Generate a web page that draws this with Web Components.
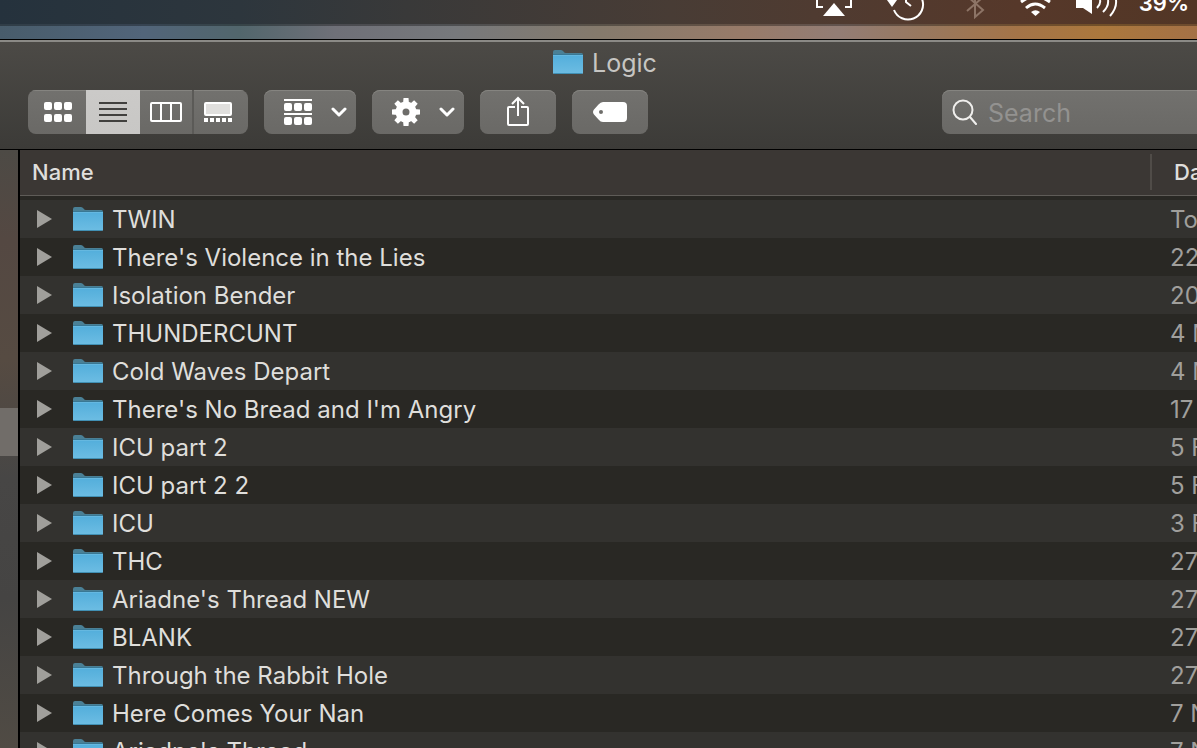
<!DOCTYPE html>
<html lang="en">
<head>
<meta charset="utf-8">
<title>Logic</title>
<style>
  html, body { height: 100%; }
  body { margin: 0; overflow: hidden; background: #292824; font-family: Inter, "Liberation Sans", sans-serif; }
</style>
</head>
<body>
<finder-desktop></finder-desktop>

<script>
const define = (name, html, setup) => {
  const template = document.createElement('template');
  template.innerHTML = html;
  customElements.define(name, class extends HTMLElement {
    constructor() {
      super();
      this.attachShadow({ mode: 'open' }).append(template.content.cloneNode(true));
    }
    connectedCallback() { if (setup) setup(this, this.shadowRoot); }
  });
};

define('folder-icon', `
  <style>
    :host { display: block; width: 30px; height: 24px; }
    svg { display: block; }
  </style>
  <svg width="30" height="24" viewBox="0 0 30 24" aria-hidden="true">
    <defs><linearGradient id="g" x1="0" y1="0" x2="0" y2="1">
      <stop offset="0" stop-color="#53aedb"/><stop offset="1" stop-color="#6dbde3"/>
    </linearGradient></defs>
    <path d="M0 2Q0 0 2 0H8Q9.500 0 10.500 1.500Q11.500 3 13 3H28.500Q30 3 30 4.500V8H0Z" fill="#4a8096"/>
    <path d="M0 5H30V22.500Q30 24 28.500 24H1.500Q0 24 0 22.500Z" fill="url(#g)"/>
    <path d="M0 5.500H30" stroke="#65b8e0"/>
    <path d="M0 4.500H30" stroke="#397894"/>
    <path d="M1 23.500H29" stroke="#4190b4"/>
  </svg>`);

define('menu-bar', `
  <style>
    :host { display: flex; justify-content: flex-end; align-items: flex-end; height: 24px; flex: none; overflow: hidden;
      color: #fff; background: linear-gradient(90deg, #25323d, #2d363d 20%, #393939 34%, #483c35 56%, #4f3b31 68%, #56382a 85%, #523625); }
    svg { display: block; flex: none; }
    .charge { font-size: 22px; line-height: 28px; font-weight: 600; padding: 0 8px 7px 0; height: 28px; }
  </style>
  <svg width="325" height="24" viewBox="0 0 325 24" fill="none" stroke="#fff" stroke-width="2" role="img" aria-label="Status icons">
    <path d="M3 0V7H9M37 0V7H31"/>
    <path d="M20 3L31 16H9Z" fill="#fff" stroke="none"/>
    <path d="M80 10A15 15 0 0 0 108 -1"/>
    <path d="M73 0H83L78 7Z" fill="#fff" stroke="none"/>
    <path d="M92 0V2L97 6"/>
    <path d="M153 11L168 -2M153 -4L169 10L161 17V0" stroke="#8d7466"/>
    <path d="M207 2Q221 -9 236 2" stroke-width="3"/>
    <path d="M212 8Q221 0 231 8" stroke-width="3"/>
    <path d="M217 12Q221.500 8.500 226 12L221.500 16Z" fill="#fff" stroke="none"/>
    <path d="M262 0H278V14L269 8H262Z" fill="#fff" stroke="none"/>
    <path d="M283 8Q287 4 286 0M289 12Q295 6 294 0M296 16Q303 8 302 0"/>
  </svg>
  <span class="charge">39%</span>`);

define('tool-button', `
  <style>
    :host { display: block; flex: none; }
    button { box-sizing: border-box; display: flex; align-items: center; justify-content: center; gap: 19px; width: 100%; height: 44px;
      margin: 0; padding: var(--pad, 0); border: 0; border-radius: 8px; color: #fff; background: linear-gradient(#72716e, #6a6966); box-shadow: inset 0 1px #858480; }
    :host([segment]) button { border-radius: 0; }
    :host([selected]) button { color: #41403e; background: linear-gradient(#cbcac8, #c8c7c5); box-shadow: none; }
    :host([divided]) button { border-right: 2px solid #5b5a57; }
  </style>
  <button type="button"><slot></slot></button>`, (host, root) => {
    const button = root.querySelector('button');
    button.setAttribute('aria-label', host.getAttribute('label'));
    if (host.hasAttribute('segment')) button.setAttribute('aria-pressed', host.hasAttribute('selected'));
  });

define('search-field', `
  <style>
    :host { display: block; flex: none; }
    label { display: flex; align-items: center; gap: 10px; height: 44px; padding-left: 10px; border-radius: 8px 0 0 8px;
      background: linear-gradient(#72716e, #6a6966); box-shadow: inset 0 1px #858480; }
    svg { display: block; flex: none; }
    input { min-width: 0; flex: 1; height: 44px; box-sizing: border-box; padding: 2px 0 0; border: 0; outline: 0; background: none; color: #fff;
      font: 25px/32px Inter, "Liberation Sans", sans-serif; }
    input::placeholder { color: #939290; opacity: 1; }
  </style>
  <label>
    <svg width="26" height="26" viewBox="0 0 26 26" fill="none" stroke="#f0efed" stroke-width="2" stroke-linecap="round" aria-hidden="true"><circle cx="11" cy="11" r="9.500"/><path d="M18 18L24 25"/></svg>
    <input type="search" placeholder="Search" aria-label="Search">
  </label>`);

const chevron = '<svg width="16" height="12" viewBox="0 0 16 12" fill="none" stroke="#fff" stroke-width="3" stroke-linecap="round" stroke-linejoin="round" aria-hidden="true"><path d="M2 3L8 9L14 3"/></svg>';
const dots = (y, size, r) => [0, 10, 20].map(x => `<rect x="${x}" y="${y}" width="${size}" height="${size}" rx="${r}"/>`).join('');
const teeth = [0, 45, 90, 135, 180, 225, 270, 315].map(a => `<path d="M11 6L11.500 0H16.500L17 6Z" transform="rotate(${a} 14 14)"/>`).join('');

define('window-toolbar', `
  <style>
    :host { display: block; flex: none; height: 107px; border-top: 2px solid #8b8a86; border-bottom: 1px solid #000; background: linear-gradient(#4c4a46, #3c3b38); }
    h1 { display: flex; align-items: center; justify-content: center; gap: 9px; margin: 0; padding: 4px 0 0 13px; height: 32px;
      font-size: 25px; line-height: 32px; font-weight: 400; color: #c6c5c2; }
    h1 span { padding-top: 2px; }
    nav { display: flex; gap: 16px; padding: 12px 0 0 28px; }
    .views { display: flex; border-radius: 8px; overflow: hidden; }
    .first { width: 58px; --pad: 0 0 0 2px; }
    .view { width: 54px; }
    .last { --pad: 0 6px 0 0; }
    .menu { width: 92px; --pad: 0 0 0 11px; }
    .action { width: 76px; }
    search-field { width: 255px; margin-left: auto; }
    svg { display: block; flex: none; }
  </style>
  <h1><folder-icon></folder-icon><span>Logic</span></h1>
  <nav>
    <div class="views">
      <tool-button class="first" segment label="Icon view">
        <svg width="28" height="20" viewBox="0 0 28 20" fill="#fff">${dots(0, 8, 2)}${dots(12, 8, 2)}</svg>
      </tool-button>
      <tool-button class="view" segment selected label="List view">
        <svg width="28" height="20" viewBox="0 0 28 20" stroke="currentColor" stroke-width="2"><path d="M0 1H28M0 7H28M0 13H28M0 19H28"/></svg>
      </tool-button>
      <tool-button class="view" segment divided label="Column view">
        <svg width="32" height="20" viewBox="0 0 32 20" fill="none" stroke="#fff" stroke-width="2"><rect x="1" y="1" width="30" height="18" rx="1"/><path d="M11 1V19M21 1V19"/></svg>
      </tool-button>
      <tool-button class="view last" segment label="Gallery view">
        <svg width="28" height="20" viewBox="0 0 28 20" fill="#fff"><rect x="1" y="1" width="26" height="12" rx="1" fill="#e0dfdd" stroke="#fff" stroke-width="2"/><path d="M0 16H4V20H0ZM6 16H10V20H6ZM12 16H16V20H12ZM18 16H22V20H18ZM24 16H28V20H24Z"/></svg>
      </tool-button>
    </div>
    <tool-button class="menu" label="Group items">
      <svg width="28" height="26" viewBox="0 0 28 26" fill="#fff"><path d="M0 0H28V2H0ZM0 14H28V16H0Z"/>${dots(4, 8, 2)}${dots(18, 8, 2)}</svg>${chevron}
    </tool-button>
    <tool-button class="menu" label="Actions">
      <svg width="28" height="28" viewBox="0 0 28 28" fill="#fff">${teeth}<circle cx="14" cy="14" r="7" fill="none" stroke="#fff" stroke-width="7"/></svg>${chevron}
    </tool-button>
    <tool-button class="action" label="Share">
      <svg width="24" height="32" viewBox="0 0 24 32" fill="none" stroke="#fff" stroke-width="2"><path d="M9 11H3Q2 11 2 12V28Q2 29 3 29H21Q22 29 22 28V12Q22 11 21 11H15M12 20V2M6 8L12 2L18 8"/></svg>
    </tool-button>
    <tool-button class="action" label="Edit tags">
      <svg width="34" height="20" viewBox="0 0 34 20" fill="#fff"><path fill-rule="evenodd" d="M10 0H30Q34 0 34 4V16Q34 20 30 20H10Q7.500 20 5.500 17.500L1 12.500Q-1 10 1 7.500L5.500 2.500Q7.500 0 10 0ZM8 8A2 2 0 0 0 8 12A2 2 0 0 0 8 8Z"/></svg>
    </tool-button>
    <search-field></search-field>
  </nav>`);

const files = [
  ['TWIN', 'To'], ["There's Violence in the Lies", '22'], ['Isolation Bender', '20'], ['THUNDERCUNT', '4 M'],
  ['Cold Waves Depart', '4 M'], ["There's No Bread and I'm Angry", '17'], ['ICU part 2', '5 F'], ['ICU part 2 2', '5 F'],
  ['ICU', '3 F'], ['THC', '27'], ["Ariadne's Thread NEW", '27'], ['BLANK', '27'],
  ['Through the Rabbit Hole', '27'], ['Here Comes Your Nan', '7 N'], ["Ariadne's Thread", '7 N']
];

define('file-list', `
  <style>
    :host { display: block; flex: 1; min-width: 0; overflow: hidden; background: #292824; }
    table { width: 100%; table-layout: fixed; border-spacing: 0; color: #dfdedb; }
    th, td { padding: 0; text-align: left; white-space: nowrap; overflow: hidden; }
    th { height: 43px; padding-bottom: 2px; font-size: 22px; line-height: 28px; font-weight: 500; background: #3b3734; border-bottom: 1px solid #5f5c58; }
    th:first-child { padding-left: 12px; }
    th:last-child { width: 47px; }
    th:last-child span { display: block; line-height: 36px; padding-left: 22px; border-left: 2px solid #504c48; }
    tbody::before { content: ""; display: block; height: 4px; }
    td { height: 38px; font-size: 24px; line-height: 36px; }
    td:last-child { height: 36px; padding: 2px 0 0 20px; color: #a09f9c; }
    tbody tr:nth-child(odd) { background: #33322f; }
    .name { display: flex; align-items: center; height: 38px; padding-left: 17px; }
    .name span { padding-top: 2px; }
    button { display: block; width: 15px; height: 18px; margin: 0 21px 0 0; padding: 0; border: 0; background: #a09f9b; clip-path: polygon(0 0, 100% 50%, 0 100%); }
    folder-icon { margin-right: 9px; }
  </style>
  <table>
    <thead><tr><th scope="col">Name</th><th scope="col"><span>Da</span></th></tr></thead>
    <tbody>${files.map(([name, date]) => `<tr><td><div class="name"><button type="button" aria-label="Expand"></button><folder-icon></folder-icon><span>${name}</span></div></td><td>${date}</td></tr>`).join('')}</tbody>
  </table>`);

define('finder-desktop', `
  <style>
    :host { display: flex; flex-direction: column; height: 100vh; overflow: hidden; }
    .wallpaper { flex: none; height: 13px; border-top: 2px solid #00000055; border-bottom: 1px solid #000;
      background: linear-gradient(90deg, #485c6b, #52657a 12%, #52666c 20%, #6f7078 28%, #77797c 38%, #857a6c 50%, #987b69 62%, #937d75 70%, #98785f 77%, #a47448 85%, #ab783d 92%, #a47146); }
    main { display: flex; flex: 1; min-height: 0; }
    aside { flex: none; width: 18px; border-right: 2px solid #000; display: flex; flex-direction: column; background: linear-gradient(#4d4a45, #544842 15%, #564b42 35%, #474645 55%, #454443 75%, #504b44); }
    .selected { margin-top: 258px; height: 48px; background: #716d69; }
  </style>
  <menu-bar></menu-bar>
  <div class="wallpaper"></div>
  <window-toolbar></window-toolbar>
  <main>
    <aside aria-label="Sidebar"><div class="selected"></div></aside>
    <file-list></file-list>
  </main>`);
</script>
</body>
</html>
